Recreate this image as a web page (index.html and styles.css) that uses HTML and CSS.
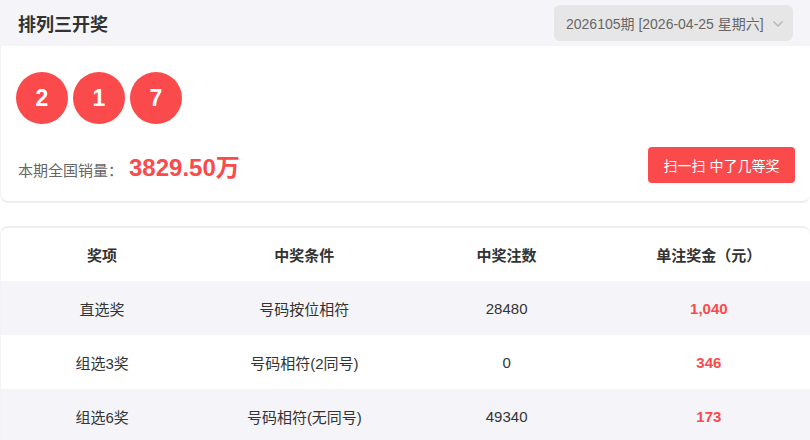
FILE: index.html
```html
<!DOCTYPE html>
<html lang="zh">
<head>
<meta charset="utf-8">
<title>排列三开奖</title>
<link rel="stylesheet" href="styles.css">
</head>
<body>
<div class="top">
  <h1 class="title">排列三开奖</h1>
  <div class="select">
    <span class="select-text">2026105期 [2026-04-25 星期六]</span>
    <svg class="chev" width="12" height="8" viewBox="0 0 12 8"><path d="M1.5 1.5 L6 6 L10.5 1.5" fill="none" stroke="#b5b5b5" stroke-width="1.3"/></svg>
  </div>
</div>
<div class="card result">
  <div class="balls">
    <span class="ball">2</span>
    <span class="ball">1</span>
    <span class="ball">7</span>
  </div>
  <div class="sales-row">
    <div class="sales"><span class="sales-label">本期全国销量：</span><span class="sales-num">3829.50万</span></div>
    <button class="scan-btn">扫一扫 中了几等奖</button>
  </div>
</div>
<div class="card prize">
  <table class="prize-table">
    <thead>
      <tr><th>奖项</th><th>中奖条件</th><th>中奖注数</th><th>单注奖金（元）</th></tr>
    </thead>
    <tbody>
      <tr class="alt"><td>直选奖</td><td>号码按位相符</td><td>28480</td><td class="money">1,040</td></tr>
      <tr><td>组选3奖</td><td>号码相符(2同号)</td><td>0</td><td class="money">346</td></tr>
      <tr class="alt"><td>组选6奖</td><td>号码相符(无同号)</td><td>49340</td><td class="money">173</td></tr>
    </tbody>
  </table>
</div>
</body>
</html>
```
FILE: styles.css
```css
* { box-sizing: border-box; }
html, body { margin: 0; padding: 0; background: #fff; }
body {
  font-family: "Liberation Sans", Arial, "Noto Sans CJK SC", sans-serif;
  color: #333;
  overflow: hidden;
}
.top {
  height: 46px;
  background: #f5f5f9;
  display: flex;
  align-items: center;
  justify-content: space-between;
  padding: 0 17px 0 18px;
}
.title {
  margin: 0;
  font-size: 18px;
  font-weight: bold;
  color: #333;
}
.select {
  width: 239px;
  height: 36px;
  background: #e6e6e6;
  border-radius: 6px;
  display: flex;
  align-items: center;
  padding: 0 9px 0 12px;
  justify-content: space-between;
}
.select-text { font-size: 14px; color: #666; }
.chev { margin-top: 1px; }
.card { background: #fff; }
.result {
  padding: 26px 15px 18px 15px;
  border-bottom: 2px solid #eeeeee;
  border-left: 1px solid #f3f3f3;
  border-radius: 0 0 8px 8px;
}
.balls { display: flex; gap: 5px; }
.ball {
  width: 52px;
  height: 52px;
  border-radius: 50%;
  background: #fb4a4b;
  color: #fff;
  font-weight: bold;
  font-size: 23px;
  display: flex;
  align-items: center;
  justify-content: center;
}
.sales-row {
  margin-top: 23px;
  display: flex;
  align-items: center;
  justify-content: space-between;
}
.sales { display: flex; align-items: baseline; padding-left: 2px; }
.sales-label { font-size: 15px; color: #666; }
.sales-num { font-size: 24px; font-weight: bold; color: #fb4a4b; margin-left: 6px; }
.scan-btn {
  width: 147px;
  height: 36px;
  border: none;
  border-radius: 4px;
  background: #fb4a4b;
  color: #fff;
  font-family: inherit;
  font-size: 14px;
  padding: 0;
}
.prize {
  margin-top: 23px;
  border-top: 2px solid #eeeeee;
  border-left: 1px solid #f3f3f3;
  border-radius: 8px 8px 0 0;
}
.prize-table {
  width: 100%;
  border-collapse: collapse;
  table-layout: fixed;
}
.prize-table th {
  height: 53px;
  font-size: 15px;
  font-weight: bold;
  color: #333;
  text-align: center;
}
.prize-table td {
  height: 54px;
  font-size: 15px;
  color: #333;
  text-align: center;
}
.prize-table tr.alt td { background: #f5f5f9; }
.prize-table td.money { color: #fb4a4b; font-weight: bold; }
```
